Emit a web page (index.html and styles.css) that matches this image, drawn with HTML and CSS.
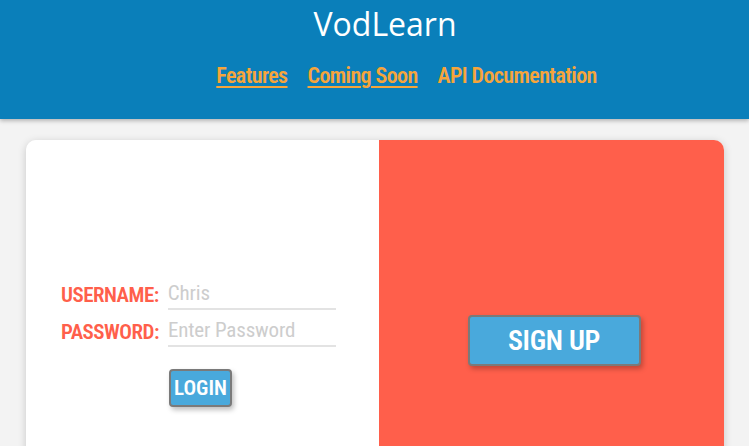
FILE: index.html
```html
<!DOCTYPE html>
<html>
<head>
<meta charset="utf-8">
<link rel="stylesheet" href="styles.css">
</head>
<body>
<header class="header">
  <h1 class="title">VodLearn</h1>
  <nav class="nav">
    <a class="nav-link underline" href="#">Features</a>
    <a class="nav-link underline" href="#">Coming Soon</a>
    <a class="nav-link" href="#">API Documentation</a>
  </nav>
</header>
<main class="main">
  <div class="card">
    <section class="login">
      <form class="form">
        <div class="row">
          <label class="label">USERNAME:</label>
          <input class="input" type="text" placeholder="Chris">
        </div>
        <div class="row">
          <label class="label">PASSWORD:</label>
          <input class="input" type="password" placeholder="Enter Password">
        </div>
        <button class="btn login-btn" type="button">LOGIN</button>
      </form>
    </section>
    <section class="signup">
      <button class="btn signup-btn" type="button">SIGN UP</button>
    </section>
  </div>
</main>
</body>
</html>
```
FILE: styles.css
```css
* { box-sizing: border-box; }
html, body { margin: 0; padding: 0; }
body {
  background: #f3f3f3;
  font-family: Roboto, "Open Sans", sans-serif;
  font-stretch: 75%;
  overflow: hidden;
  height: 446px;
}
.header {
  background: #0a7fba;
  height: 119px;
  box-shadow: 0 2px 4px rgba(0,0,0,0.25);
  text-align: center;
  padding-top: 3px;
  position: relative;
  z-index: 1;
}
.title {
  margin: 0;
  padding-left: 21px;
  font-family: "Open Sans", sans-serif;
  font-stretch: 100%;
  font-weight: 400;
  font-size: 32px;
  line-height: 42px;
  color: #ffffff;
}
.nav {
  display: flex;
  justify-content: center;
  gap: 20px;
  margin-top: 17px;
  padding-left: 64px;
}
.nav-link {
  color: #f6a53b;
  font-weight: 600;
  font-size: 22px;
  line-height: 28px;
  letter-spacing: -0.6px;
  text-decoration: none;
}
.nav-link.underline {
  text-decoration: underline;
  text-underline-offset: 3px;
  text-decoration-thickness: 2px;
}
.main {
  padding: 21px 25px 0 26px;
}
.card {
  display: flex;
  height: 400px;
  border-radius: 10px;
  overflow: hidden;
  box-shadow: 0 2px 8px rgba(0,0,0,0.18);
}
.login {
  width: 353px;
  background: #ffffff;
  display: flex;
  align-items: center;
  justify-content: center;
  padding-top: 6px;
  padding-right: 8px;
}
.form {
  display: flex;
  flex-direction: column;
  align-items: flex-start;
}
.row {
  display: flex;
  align-items: flex-end;
  gap: 9px;
  margin-bottom: 6px;
}
.label {
  color: #ff5f4b;
  font-weight: 600;
  font-size: 21px;
  line-height: 29px;
  letter-spacing: -0.5px;
  white-space: nowrap;
}
.input {
  width: 168px;
  border: none;
  border-bottom: 2px solid #e3e3e3;
  outline: none;
  font-family: inherit;
  font-stretch: 75%;
  font-size: 21px;
  line-height: 29px;
  letter-spacing: -0.15px;
  padding: 0;
  color: #555;
  background: transparent;
}
.input::placeholder { color: #cdcdcd; }
.btn {
  background: #49a9dc;
  color: #ffffff;
  font-family: inherit;
  font-stretch: 75%;
  font-weight: 600;
  border: 2px solid #7a7a7a;
  border-radius: 4px;
  box-shadow: 2px 3px 5px rgba(0,0,0,0.25);
  cursor: pointer;
}
.login-btn {
  align-self: center;
  margin-top: 16px;
  margin-left: 4px;
  width: 63px;
  height: 38px;
  font-size: 21px;
  padding: 0;
}
.signup {
  flex: 1;
  background: #ff5f4b;
  display: flex;
  align-items: center;
  justify-content: center;
}
.signup-btn {
  width: 173px;
  height: 51px;
  font-size: 28px;
  letter-spacing: -0.3px;
  padding: 0;
  margin-left: 5px;
}
```
